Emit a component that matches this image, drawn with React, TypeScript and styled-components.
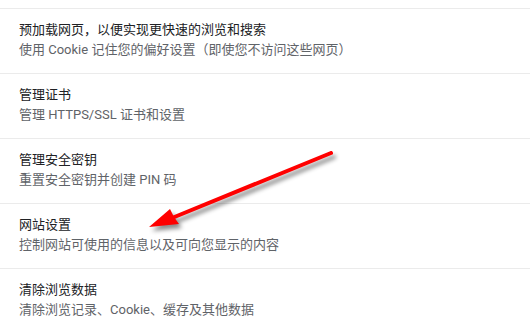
import styled, { createGlobalStyle } from 'styled-components'

const GlobalStyle = createGlobalStyle`
    html, body {
        margin: 0;
        padding: 0;
        background: #ffffff;
    }
`

const Page = styled.div`
    position: relative;
    width: 530px;
    height: 320px;
    overflow: hidden;
    background: #ffffff;
    padding-top: 8px;
    box-sizing: border-box;
    font-family: Roboto, "Noto Sans CJK SC", sans-serif;
`

const List = styled.ul`
    list-style: none;
    margin: 0;
    padding: 0;
    border-top: 1px solid #ebebeb;
`

const Row = styled.li`
    display: flex;
    flex-direction: column;
    height: 53px;
    padding: 11px 19px 0;
    border-bottom: 1px solid #ebebeb;
`

const Title = styled.div`
    font-size: 13px;
    line-height: 20px;
    color: #202124;
`

const Subtitle = styled.div`
    font-size: 13px;
    line-height: 20px;
    color: #5f6368;
`

const ArrowLayer = styled.svg`
    position: absolute;
    left: 0;
    top: 0;
    pointer-events: none;
    filter: drop-shadow(3px 4px 2px rgba(0, 0, 0, 0.45));
`

const rows = [
    { title: '预加载网页，以便实现更快速的浏览和搜索', sub: '使用 Cookie 记住您的偏好设置（即使您不访问这些网页）' },
    { title: '管理证书', sub: '管理 HTTPS/SSL 证书和设置' },
    { title: '管理安全密钥', sub: '重置安全密钥并创建 PIN 码' },
    { title: '网站设置', sub: '控制网站可使用的信息以及可向您显示的内容' },
    { title: '清除浏览数据', sub: '清除浏览记录、Cookie、缓存及其他数据' },
]

export default function App() {
    return (
        <Page>
            <GlobalStyle />
            <List>
                {rows.map((r) => (
                    <Row key={r.title}>
                        <Title>{r.title}</Title>
                        <Subtitle>{r.sub}</Subtitle>
                    </Row>
                ))}
            </List>
            {/* red annotation arrow pointing at 网站设置 */}
            <ArrowLayer width="530" height="320" viewBox="0 0 530 320">
                <line x1="331" y1="153" x2="172" y2="218" stroke="#ff0000" strokeWidth="4" strokeLinecap="round" />
                <polygon points="149,227 170,209 174,217 179,224" fill="#ff0000" />
            </ArrowLayer>
        </Page>
    )
}
